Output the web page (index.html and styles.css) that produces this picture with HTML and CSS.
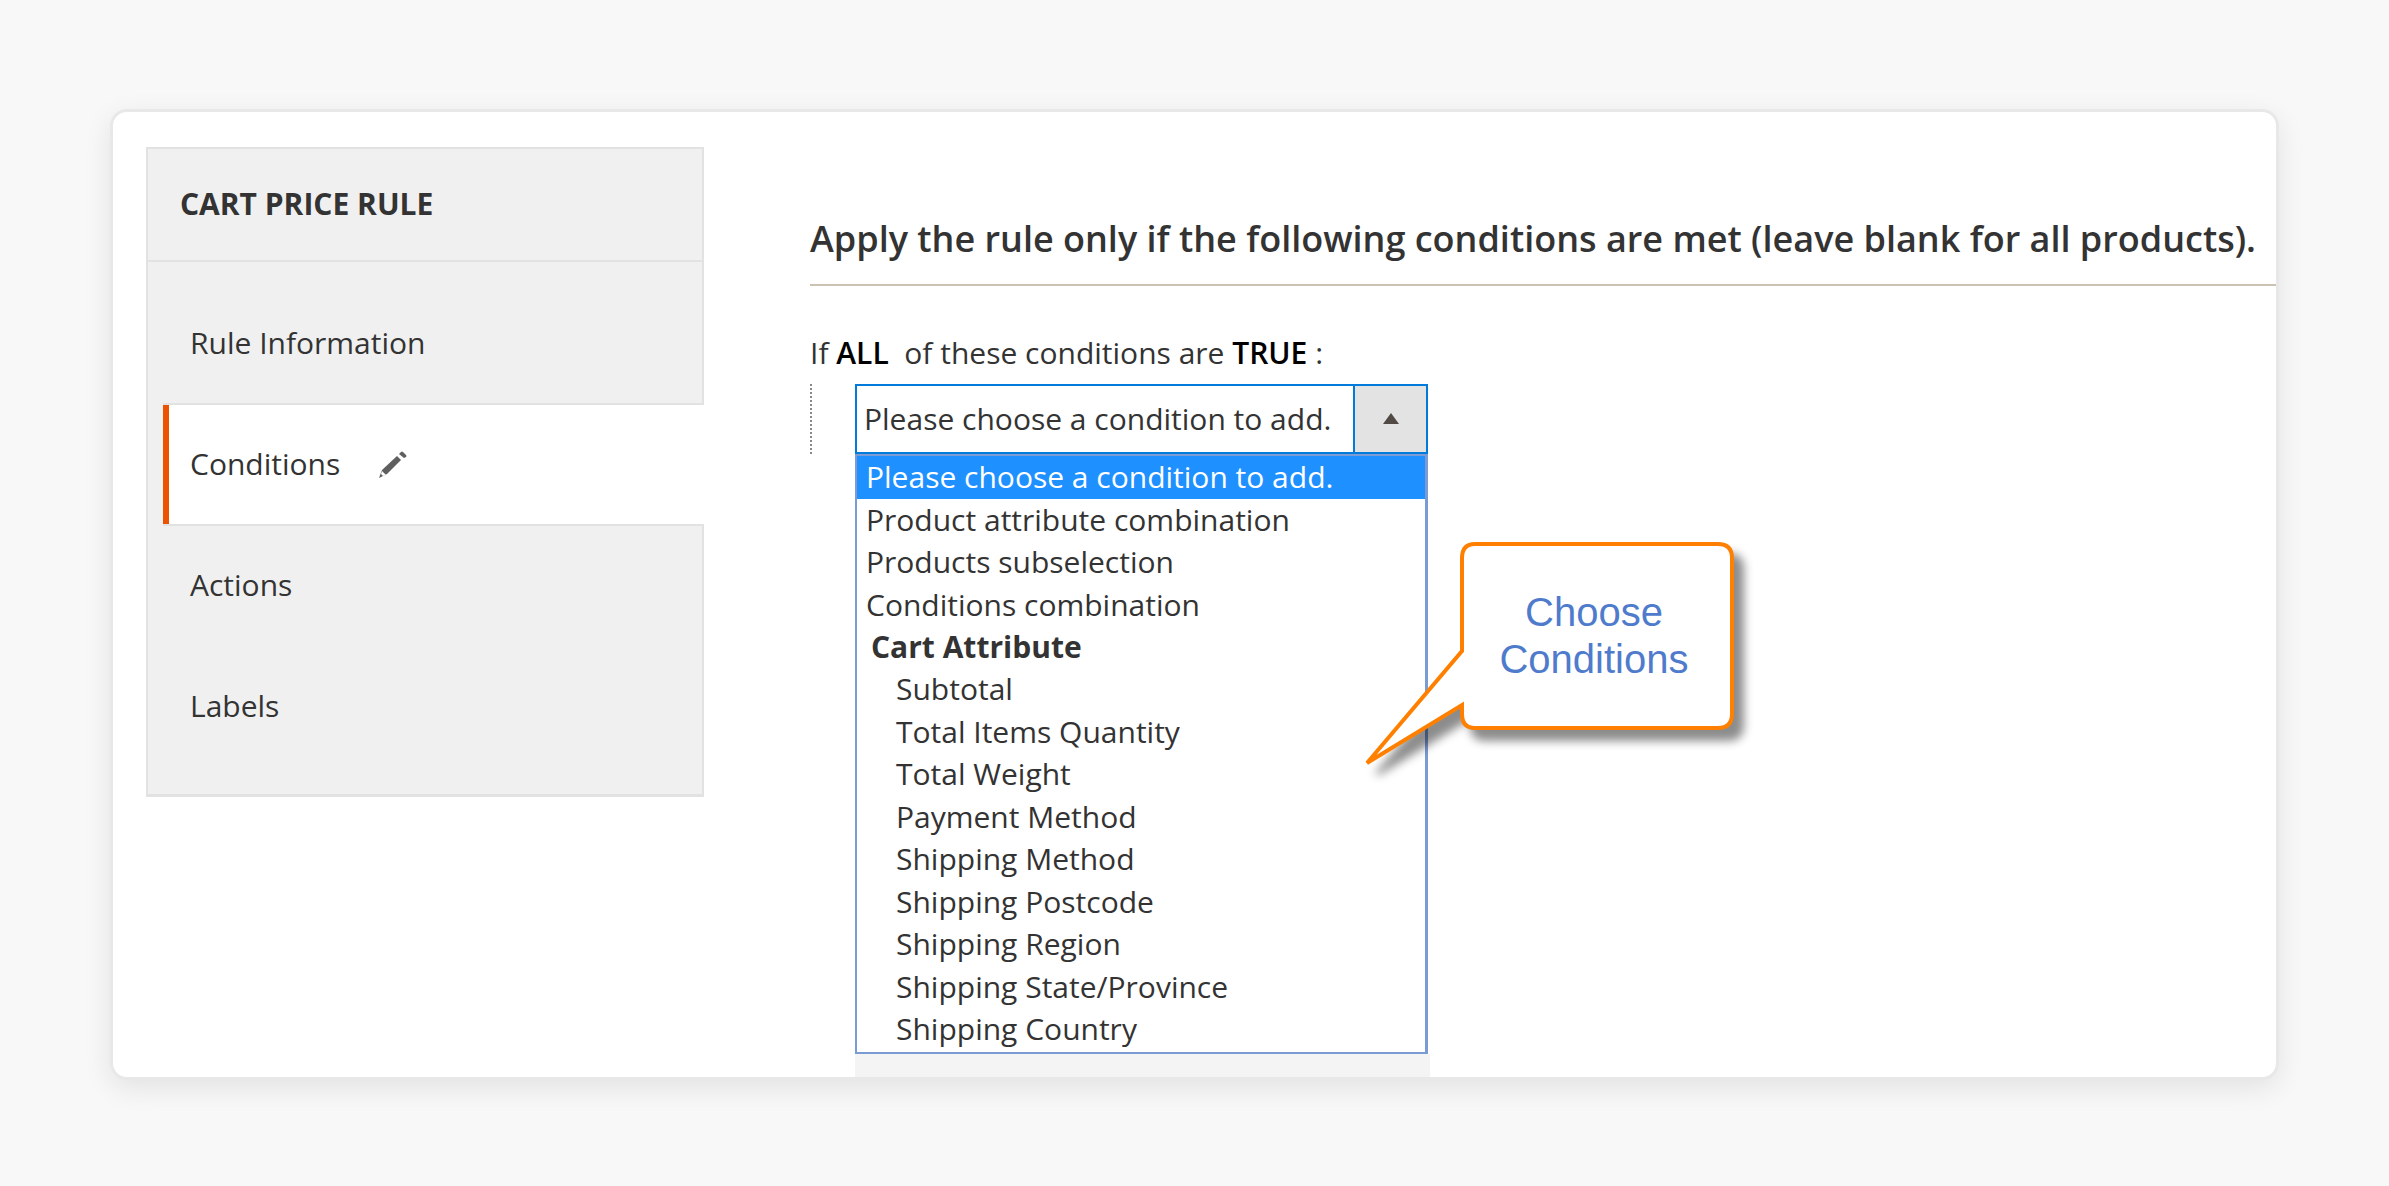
FILE: index.html
```html
<!DOCTYPE html>
<html lang="en">
<head>
  <meta charset="utf-8">
  <title>Cart Price Rule</title>
  <link rel="stylesheet" href="styles.css">
</head>
<body>
  <div class="card">
    <nav class="sidebar" aria-label="Cart Price Rule">
      <h2 class="sidebar-title">CART PRICE RULE</h2>
      <ul class="tabs">
        <li><a class="tab" href="#info">Rule Information</a></li>
        <li>
          <a class="tab tab-active" href="#conditions" aria-current="page">Conditions
            <svg class="pencil" viewBox="0 0 30 30" aria-hidden="true">
              <path d="M1 29 L4 21 L19 7 L23 11 L9 25 Z"/>
              <path d="M21 5 L23 3 Q24 2 25 3 L28 6 Q29 7 28 8 L26 9 Z"/>
              <path class="pencil-tip" d="M4 22 L8 26 L5 27 L3 25 Z"/>
            </svg>
          </a>
        </li>
        <li><a class="tab" href="#actions">Actions</a></li>
        <li><a class="tab" href="#labels">Labels</a></li>
      </ul>
    </nav>

    <main class="content">
      <h1 class="heading">Apply the rule only if the following conditions are met (leave blank for all products).</h1>
      <p class="sentence">If <a href="#all">ALL</a>&nbsp; of these conditions are <a href="#true">TRUE</a> :</p>

      <div class="rule-tree">
        <div class="picker">
          <div class="combo">
            <select class="combo-box" aria-label="Condition">
              <option>Please choose a condition to add.</option>
            </select>
            <span class="combo-arrow" aria-hidden="true">
              <svg viewBox="0 0 16 12"><path d="M8 0 L16 11 H0 Z"/></svg>
            </span>
          </div>
          <select class="options" size="14" aria-label="Available conditions">
            <option selected>Please choose a condition to add.</option>
            <option>Product attribute combination</option>
            <option>Products subselection</option>
            <option>Conditions combination</option>
            <optgroup label="Cart Attribute">
              <option>Subtotal</option>
              <option>Total Items Quantity</option>
              <option>Total Weight</option>
              <option>Payment Method</option>
              <option>Shipping Method</option>
              <option>Shipping Postcode</option>
              <option>Shipping Region</option>
              <option>Shipping State/Province</option>
              <option>Shipping Country</option>
            </optgroup>
          </select>
          <div class="field-below"></div>

          <div class="callout">
            <svg class="callout-shape" viewBox="0 0 400 260" aria-hidden="true">
              <path d="M118 21 H361 Q375 21 375 35 V191 Q375 205 361 205 H118 Q105 205 105 191 V182 L10 240 L105 128 V35 Q105 21 118 21 Z"/>
            </svg>
            <p class="callout-text">Choose<br>Conditions</p>
          </div>
        </div>
      </div>
    </main>
  </div>
</body>
</html>
```
FILE: styles.css
```css
* {
  box-sizing: border-box;
}

body {
  margin: 0;
  padding: 109px 110px;
  background: #f8f8f8;
  color: #333;
  font: 30px/42px "Open Sans", sans-serif;
}

h1, h2, p, ul {
  margin: 0;
  padding: 0;
}

a {
  color: inherit;
  text-decoration: none;
}

/* Card */
.card {
  display: flex;
  align-items: flex-start;
  gap: 106px;
  padding-left: 33px;
  background: #fff;
  border: 3px solid #e8e8e8;
  border-radius: 17px;
  box-shadow: 0 8px 28px rgba(0, 0, 0, 0.09);
}

/* Sidebar */
.sidebar {
  flex: none;
  width: 558px;
  margin-top: 35px;
  background: #f0f0f0;
  border: 2px solid #e2e2e2;
  border-bottom-width: 3px;
}

.sidebar-title {
  padding: 34px 32px 35px;
  border-bottom: 2px solid #e2e2e2;
  font-size: 30px;
  line-height: 42px;
  font-weight: 700;
}

.tabs {
  padding: 20px 0 28px;
  list-style: none;
}

.tab {
  display: flex;
  align-items: center;
  height: 121px;
  padding-left: 42px;
}

.tab-active {
  gap: 38px;
  height: 123px;
  margin: 0 -2px -2px 15px;
  padding: 0 0 2px 27px;
  background: #fff;
  border: solid #e2e2e2;
  border-width: 2px 0;
  box-shadow: inset 6px 0 #eb5202;
  font-weight: 500;
}

.pencil {
  width: 30px;
  height: 30px;
  fill: #5f5f5f;
}

.pencil-tip {
  fill: #fff;
}

/* Conditions */
.content {
  flex: 1;
  min-width: 0;
}

.heading {
  padding: 102px 0 20px;
  border-bottom: 2px solid #cac3b4;
  font-size: 36px;
  line-height: 50px;
  font-weight: 600;
  white-space: nowrap;
}

.sentence {
  margin: 46px 0 10px;
}

.sentence a {
  color: #000;
  font-weight: 600;
}

.rule-tree {
  padding-left: 45px;
  background: repeating-linear-gradient(#888 0 2px, transparent 2px 4px) 0 0 / 2px 70px no-repeat;
}

.picker {
  position: relative;
  width: 573px;
}

.combo {
  display: grid;
}

.combo-box {
  grid-area: 1 / 1;
  height: 70px;
  margin: 0;
  padding: 0 76px 1px 7px;
  appearance: none;
  background: #fff;
  border: 2px solid #007bdb;
  border-radius: 0;
  color: #333;
  font: inherit;
}

.combo-arrow {
  grid-area: 1 / 1;
  justify-self: end;
  display: flex;
  align-items: center;
  justify-content: center;
  width: 75px;
  background: #e3e3e3;
  border: 2px solid #007bdb;
  pointer-events: none;
}

.combo-arrow svg {
  width: 16px;
  height: 12px;
  fill: #514943;
}

.options {
  display: block;
  width: 100%;
  height: 600px;
  margin: 0;
  padding: 0;
  overflow: hidden;
  background: #fff;
  border: 2px solid #7b9bd4;
  border-right-width: 3px;
  border-radius: 0;
  outline: none;
  color: #333;
  font: inherit;
}

.options option {
  min-height: 0;
  padding: 0 0 2px 9px;
}

.options option:nth-child(even) {
  padding-bottom: 1px;
}

.options option:checked {
  background: #1e90ff linear-gradient(#1e90ff, #1e90ff);
  color: #fff;
}

.options optgroup {
  padding-left: 12px;
  font-weight: 700;
}

.options optgroup option {
  padding-left: 27px;
  font-weight: 400;
}

.field-below {
  height: 23px;
  margin-right: -2px;
  background: #f4f4f4;
}

/* Callout lies over the list and points into it */
.callout {
  position: absolute;
  top: 139px;
  left: 502px;
  width: 400px;
  height: 260px;
}

.callout-shape {
  display: block;
  width: 100%;
  fill: #fff;
  stroke: #ff8000;
  stroke-width: 4px;
  filter: drop-shadow(10px 11px 5px rgba(0, 0, 0, 0.45));
}

.callout-text {
  position: absolute;
  top: 66px;
  left: 104px;
  width: 266px;
  color: #4f7bcc;
  font: 40px/47px "Liberation Sans", Arial, sans-serif;
  text-align: center;
}
```
